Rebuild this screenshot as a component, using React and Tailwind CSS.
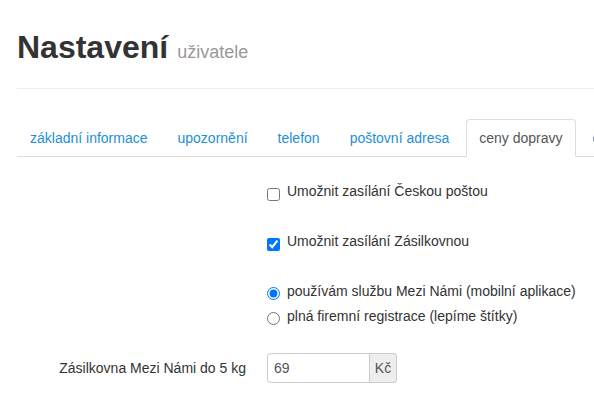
import React from "react";

const tabs = ["základní informace", "upozornění", "telefon", "poštovní adresa"];

export default function App() {
  return (
    <div
      className="w-[594px] h-[398px] overflow-hidden bg-white text-[14px] leading-5 text-[#333]"
      style={{ fontFamily: '"Liberation Sans", Arial, Helvetica, sans-serif' }}
    >
      <div className="w-[900px] pl-[17px] pt-[29px]">
        <h1 className="h-[36px] flex items-baseline gap-[9px] text-[32px] leading-[36px] font-bold text-[#333] whitespace-nowrap">
          <span>Nastavení</span>
          <span className="text-[18px] leading-none font-normal text-[#999]">uživatele</span>
        </h1>
        <div className="mt-[23px] h-px bg-[#eee]" />
        <ul className="mt-[30px] flex flex-nowrap border-b border-[#ddd] whitespace-nowrap">
          {tabs.map((t) => (
            <li key={t} className="-mb-px mr-[4px]">
              <a className="block border border-transparent rounded-t px-3 py-2 text-[#1e8fd6]">
                {t}
              </a>
            </li>
          ))}
          <li className="-mb-px mr-[4px]">
            <a className="block border border-[#ddd] border-b-white rounded-t px-3 py-2 bg-white text-[#555]">
              ceny dopravy
            </a>
          </li>
          <li className="-mb-px mr-[4px]">
            <a className="block border border-transparent rounded-t px-3 py-2 text-[#1e8fd6]">
              další
            </a>
          </li>
        </ul>

        <div className="pl-[250px]">
          <label className="mt-[24px] flex items-start">
            <input type="checkbox" className="m-0 mt-[7px] w-[13px] h-[13px] shrink-0" />
            <span className="ml-[7px]">Umožnit zasílání Českou poštou</span>
          </label>
          <label className="mt-[30px] flex items-start">
            <input
              type="checkbox"
              defaultChecked
              className="m-0 mt-[7px] w-[13px] h-[13px] shrink-0 accent-[#0075ff]"
            />
            <span className="ml-[7px]">Umožnit zasílání Zásilkovnou</span>
          </label>
          <label className="mt-[30px] flex items-start">
            <input
              type="radio"
              name="zas"
              defaultChecked
              className="m-0 mt-[6px] w-[13px] h-[13px] shrink-0 accent-[#0075ff]"
            />
            <span className="ml-[7px]">používám službu Mezi Námi (mobilní aplikace)</span>
          </label>
          <label className="mt-[5px] flex items-start">
            <input type="radio" name="zas" className="m-0 mt-[6px] w-[13px] h-[13px] shrink-0" />
            <span className="ml-[7px]">plná firemní registrace (lepíme štítky)</span>
          </label>
        </div>

        <div className="mt-[27px] flex items-center">
          <label className="w-[267px] shrink-0 pr-[21px] text-right -ml-[17px]">
            Zásilkovna Mezi Námi do 5 kg
          </label>
          <div className="flex h-[30px]">
            <input
              type="text"
              defaultValue="69"
              className="w-[103px] h-[30px] border border-[#ccc] rounded-l-[4px] px-[6px] text-[#555] outline-none"
            />
            <span className="h-[30px] w-[27px] flex items-center justify-center border border-l-0 border-[#ccc] bg-[#eee] rounded-r-[4px] text-[#555]">
              Kč
            </span>
          </div>
        </div>
      </div>
    </div>
  );
}
